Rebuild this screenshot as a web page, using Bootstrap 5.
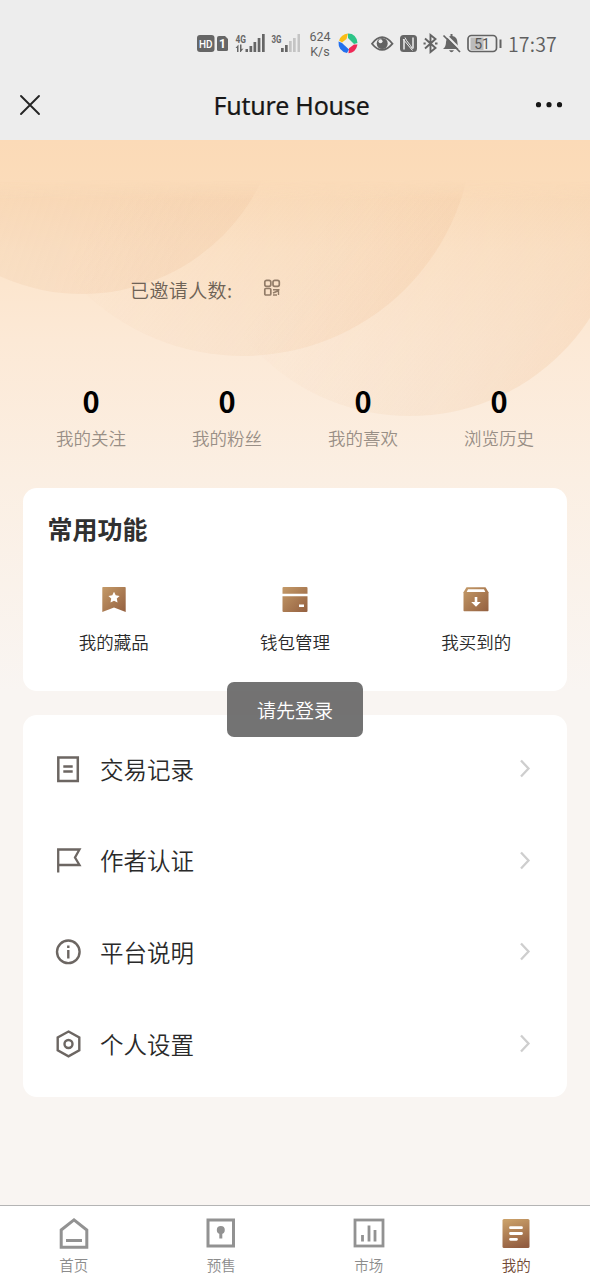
<!DOCTYPE html>
<html lang="zh-CN">
<head>
<meta charset="utf-8">
<meta name="viewport" content="width=device-width, initial-scale=1">
<title>Future House</title>
<link href="https://cdn.jsdelivr.net/npm/bootstrap@5.3.0/dist/css/bootstrap.min.css" rel="stylesheet">
<style>
  body { font-family: "Noto Sans CJK SC", sans-serif; font-weight: 350; color: #2a2a2a; background: #f9f5f2; line-height: 1; }
  svg { display: block; flex: none; }
  .phone { height: 1278px; background: linear-gradient(#fbdab7 0, #fbdab7 140px, #fbdcba 185px, #fce4ca 250px, #fce9d6 340px, #fbefe3 480px, #f9f5f2 690px); }
  .topbar { height: 140px; background: #ededed; }
  .status { height: 70px; padding: 17px 33px 0 196px; color: #5f5f5f; }
  .net { font: 400 12.5px/15px Roboto, sans-serif; width: 24px; margin-left: 6px; padding-top: 12px; }
  .clock { font: 350 19.500px/24px "Noto Sans CJK SC", sans-serif; margin: 15px 0 0 3px; letter-spacing: .2px; }
  .titlebar { height: 70px; padding: 0 26px 0 18px; }
  .titlebar h1 { font: 400 25px/30px "Noto Sans", "Noto Sans CJK SC", sans-serif; color: #171717; -webkit-text-stroke: .2px #171717; padding: 0 0 0 7px; letter-spacing: -.2px; }
  .hero { height: 348px; }
  .rings { left: 0; top: 0; }
  .invite { padding: 138px 0 0 130px; height: 240px; font-size: 19px; color: #6e6256; }
  .invite span { line-height: 23px; width: 133px; letter-spacing: .4px; }
  .num { font-size: 29px; font-weight: 700; line-height: 40px; color: #000; }
  .stat-name { font-size: 17.5px; line-height: 26px; color: #998f86; margin-top: 5px; }
  .mx-page { margin-left: 23px; margin-right: 23px; }
  .panel { background: #fff; border-radius: 14px; }
  .panel-a { height: 203px; }
  .panel-a h2 { font-size: 25px; font-weight: 700; line-height: 36px; padding: 22px 0 0 24.5px; color: #303030; }
  .fn-row { padding-top: 40px; }
  .fn { font-size: 17.5px; line-height: 26px; margin-top: 15px; }
  .panel-b { height: 382px; margin-top: 24px; padding: 8px 36px 0 31px; }
  .line { height: 91.7px; font-size: 23.5px; }
  .line span { margin-left: 18px; padding-top: 1px; }
  .toast-tip { left: 227px; top: 682px; width: 136px; height: 55px; border-radius: 7px; background: rgba(96,96,96,.88); color: #fff; font-size: 19px; }
  .tabs { height: 73px; background: #fff; border-top: 1px solid #b4b4b4; color: #8c8c8c; font-size: 14.5px; padding-top: 11px; }
  .tabs .tab-name { line-height: 20px; margin-top: 6px; }
  .tabs .current { color: #704733; }
</style>
</head>
<body>
<div class="phone d-flex flex-column position-relative overflow-hidden">
  <header class="topbar">
    <div class="status d-flex align-items-start justify-content-between">
      <div class="d-flex">
        <svg width="106" height="38" viewBox="196 17 106 38" fill="#666" font-family="Roboto, sans-serif" font-weight="700">
          <rect x="197" y="35" width="17.500" height="17" rx="3"/>
          <text x="199" y="47.500" font-size="10.500" fill="#fff" font-weight="500" textLength="13.500" lengthAdjust="spacingAndGlyphs">HD</text>
          <path d="M219 36h6l3 3v10.500q0 1.500-1.500 1.500h-8q-1.500 0-1.500-1.500V38q0-2 2-2z"/>
          <text x="222.500" y="48" font-size="12" fill="#fff" text-anchor="middle">1</text>
          <text x="235.500" y="42.500" font-size="10.500" textLength="10.500" lengthAdjust="spacingAndGlyphs">4G</text>
          <path d="M235.500 48l3-3.500V52H237v-4zM240 44.500h1.500v4.500l2-.5-2.700 3.500H240zM245.500 49h2.500v3h-2.500zM249.500 46h2.700v6h-2.700zM253.500 42h2.700v10h-2.700zM257.700 38h2.700v14h-2.700zM262 34h2.700v18H262z"/>
          <text x="271.500" y="42.500" font-size="10.500" textLength="10" lengthAdjust="spacingAndGlyphs">3G</text>
          <path d="M281 48h2.700v4H281zM285 45h2.700v7H285z"/>
          <path d="M289 41h2.700v11H289zM293 38h2.700v14H293zM297.500 34h2.500v18h-2.500z" fill="#c4c4c4"/>
        </svg>
        <div class="net text-center"><div>624</div><div>K/s</div></div>
        <svg width="28" height="38" viewBox="332 17 28 38">
          <path d="M339 40.500q2-6 9-7l-1.500 5.500-4.500 3.500z" fill="#f9bd16"/>
          <path d="M348 33.500q8.500 0 9.500 9.500l-3.500 1-6-6z" fill="#2dc487"/>
          <path d="M357.500 44.500q-1.500 8-9 8.800l.5-5 5-3.800z" fill="#ef2856"/>
          <path d="M338.500 41.500q-.5 9.500 8.500 11.500l2-3.500-7-6.500z" fill="#2370ee"/>
        </svg>
      </div>
      <div class="d-flex">
        <svg width="134" height="38" viewBox="370.500 17 134 38" fill="none" stroke="#636363" stroke-width="1.800">
          <path d="M371.500 43.700q10-13 20.500 0q-10.500 12.500-20.500 0z"/>
          <circle cx="381.700" cy="43.500" r="5.500" fill="#636363" stroke="none"/><circle cx="380" cy="41.200" r="2" fill="#ededed" stroke="none"/>
          <rect x="399.500" y="35" width="17" height="17" rx="3.500" fill="#666" stroke="none"/>
          <path d="M403.500 49.500V39M412.500 37.500V48.500" stroke="#ededed" stroke-width="1.500"/><path d="M404.500 37.500c2 5 5 6 7.500 11.500M402.500 39l9.500 11.500" stroke="#ededed" stroke-width="1"/>
          <path d="M424.500 38.500l10.500 9.500-5 4V35l5 4-10.500 9.500M423 43.500h2.200M434.500 43.500h2.500" stroke-width="1.900"/>
          <path d="M442.500 49q3-2 3-7 .5-5 4.500-6v-2h2v2q5 1 5 7 0 4 3 6zM448.500 50.200h5q-2.500 4-5 0z" fill="#666" stroke="none"/>
          <path d="M444.500 34l17 17" stroke="#ededed" stroke-width="2"/><path d="M443 35.500l16.500 16.500" stroke-width="1.700"/>
          <rect x="470" y="37.500" width="13" height="12.500" fill="#bbb" stroke="none"/>
          <rect x="467.500" y="35.500" width="28.500" height="16" rx="3.500" stroke-width="1.700"/>
          <path d="M500 39.500v8.500" stroke-width="2"/>
          <text x="481.500" y="48.700" text-anchor="middle" font-family="Roboto, sans-serif" font-size="14" font-weight="400" fill="#555" stroke="none">51</text>
        </svg>
        <div class="clock">17:37</div>
      </div>
    </div>
    <div class="titlebar d-flex align-items-center justify-content-between">
      <svg width="24" height="24" viewBox="0 0 24 24" stroke="#252525" stroke-width="1.900" stroke-linecap="round"><path d="M3 3l18 18M21 3L3 21"/></svg>
      <h1 class="m-0">Future House</h1>
      <svg width="30" height="8" viewBox="0 0 30 8" fill="#171717"><circle cx="4.500" cy="3.700" r="2.600"/><circle cx="15" cy="3.700" r="2.600"/><circle cx="25.500" cy="3.700" r="2.600"/></svg>
    </div>
  </header>

  <section class="hero position-relative">
    <svg class="rings position-absolute" width="590" height="348" viewBox="0 140 590 348">
      <defs>
        <linearGradient id="ring" x1=".38" y1=".45" x2=".9" y2=".85"><stop offset="0" stop-color="#f1c8a2" stop-opacity="0"/><stop offset=".7" stop-color="#f1c8a2" stop-opacity=".2"/><stop offset="1" stop-color="#f1c49b" stop-opacity=".3"/></linearGradient>
        <linearGradient id="ring-left" x1=".1" y1=".5" x2=".8" y2=".75"><stop offset="0" stop-color="#f1c8a2" stop-opacity=".16"/><stop offset="1" stop-color="#efc5a0" stop-opacity=".3"/></linearGradient>
        <linearGradient id="veil" x1="0" y1="180" x2="0" y2="200" gradientUnits="userSpaceOnUse"><stop offset="0" stop-color="#000"/><stop offset="1" stop-color="#fff"/></linearGradient>
        <mask id="fade" maskUnits="userSpaceOnUse" x="0" y="140" width="590" height="348"><rect y="140" width="590" height="348" fill="url(#veil)"/></mask>
      </defs>
      <g fill="url(#ring)" mask="url(#fade)"><circle cx="82" cy="95" r="199" fill="url(#ring-left)"/><circle cx="243" cy="126" r="230"/><circle cx="410" cy="202" r="214"/></g>
    </svg>
    <div class="invite d-flex position-relative">
      <span>已邀请人数:</span>
      <svg width="18" height="19" viewBox="0 0 18 19" fill="none" stroke="#927c68" stroke-width="1.700"><rect x="1.800" y="2.300" width="6" height="6" rx="1.800"/><rect x="10" y="2.300" width="6.300" height="6" rx="1.800"/><rect x="1.800" y="10.500" width="6" height="6.500" rx="1"/><path d="M10 11.800h6.500M10 15l6-2.500M15.500 13v4M10 17h4" stroke-width="1.400"/></svg>
    </div>
    <div class="mx-page position-relative">
      <div class="row g-0 text-center">
        <div class="col-3"><div class="num">0</div><div class="stat-name">我的关注</div></div>
        <div class="col-3"><div class="num">0</div><div class="stat-name">我的粉丝</div></div>
        <div class="col-3"><div class="num">0</div><div class="stat-name">我的喜欢</div></div>
        <div class="col-3"><div class="num">0</div><div class="stat-name">浏览历史</div></div>
      </div>
    </div>
  </section>

  <section class="panel panel-a mx-page">
    <h2 class="m-0">常用功能</h2>
    <div class="row g-0 text-center fn-row">
      <div class="col-4">
        <svg class="mx-auto" width="28" height="28" viewBox="0 0 28 28"><defs><linearGradient id="gold" x1="0" y1="0" x2="1" y2="1"><stop stop-color="#c49a68"/><stop offset="1" stop-color="#946040"/></linearGradient></defs><path fill="url(#gold)" d="M3 1h22q.7 0 .7.700V26L14 21.500 2.300 26V1.700Q2.300 1 3 1z"/><path fill="#fff" d="M14 5.800l1.700 3.500 3.900.6-2.800 2.700.7 3.900-3.500-1.800-3.500 1.800.7-3.900-2.800-2.700 3.900-.6z"/></svg>
        <div class="fn">我的藏品</div>
      </div>
      <div class="col-4">
        <svg class="mx-auto" width="28" height="28" viewBox="0 0 28 28"><path fill="url(#gold)" d="M2.500 1h23q1 0 1 1v23q0 1-1 1h-23q-1 0-1-1V2q0-1 1-1z"/><path fill="#fff" d="M1 7.800h26v2.400H1zM18 18.500h5v2.500h-5z"/></svg>
        <div class="fn">钱包管理</div>
      </div>
      <div class="col-4">
        <svg class="mx-auto" width="28" height="28" viewBox="0 0 28 28"><path fill="url(#gold)" d="M4.500 1.200h19l3 5V24.500q0 .7-.7.700H2.200q-.7 0-.7-.7V6.200z"/><path fill="#fff" d="M6 3.300h16l1.300 2.700H4.700zM12.700 11h2.600v5h3.500L14 20.800 9.200 16h3.500z"/></svg>
        <div class="fn">我买到的</div>
      </div>
    </div>
  </section>

  <section class="panel panel-b mx-page">
    <div class="line d-flex align-items-center">
      <svg width="28" height="28" viewBox="0 0 28 28" fill="none" stroke="#6c6662" stroke-width="2.500"><rect x="4.300" y="2.500" width="19.500" height="23.500"/><path d="M9.300 11.500h9.400M9.300 16.500h9.400"/></svg>
      <span class="me-auto">交易记录</span>
      <svg width="12" height="20" viewBox="0 0 12 20" fill="none" stroke="#cecece" stroke-width="2.300"><path d="M2 1.500l7.500 8L2 17.500"/></svg>
    </div>
    <div class="line d-flex align-items-center">
      <svg width="28" height="28" viewBox="0 0 28 28" fill="none" stroke="#6c6662" stroke-width="2.300"><path d="M4.200 25.500V2.500H25.500l-4.500 8L25.500 18H4.200"/></svg>
      <span class="me-auto">作者认证</span>
      <svg width="12" height="20" viewBox="0 0 12 20" fill="none" stroke="#cecece" stroke-width="2.300"><path d="M2 1.500l7.500 8L2 17.500"/></svg>
    </div>
    <div class="line d-flex align-items-center">
      <svg width="28" height="28" viewBox="0 0 28 28" fill="none" stroke="#6c6662" stroke-width="2.400"><circle cx="14.300" cy="13.800" r="11.300"/><path d="M14.300 12v8.500M14.300 7.500v2.500"/></svg>
      <span class="me-auto">平台说明</span>
      <svg width="12" height="20" viewBox="0 0 12 20" fill="none" stroke="#cecece" stroke-width="2.300"><path d="M2 1.500l7.500 8L2 17.500"/></svg>
    </div>
    <div class="line d-flex align-items-center">
      <svg width="28" height="28" viewBox="0 0 28 28" fill="none" stroke="#6c6662" stroke-width="2.400"><path d="M14.500 1.500l10.800 6v12.800l-10.800 6-10.800-6V7.500z"/><circle cx="14.500" cy="14" r="4"/></svg>
      <span class="me-auto">个人设置</span>
      <svg width="12" height="20" viewBox="0 0 12 20" fill="none" stroke="#cecece" stroke-width="2.300"><path d="M2 1.500l7.500 8L2 17.500"/></svg>
    </div>
  </section>

  <nav class="tabs mt-auto">
    <div class="row g-0 text-center">
      <div class="col-3">
        <svg class="mx-auto" width="32" height="32" viewBox="0 0 32 32" fill="none" stroke="#929292" stroke-width="3"><path d="M3.200 13L16 2.800 28.800 13v17.300H3.200z"/><path d="M8 23.500h16"/></svg>
        <div class="tab-name">首页</div>
      </div>
      <div class="col-3">
        <svg class="mx-auto" width="32" height="32" viewBox="0 0 32 32" fill="none" stroke="#929292" stroke-width="3"><rect x="3" y="3" width="25.500" height="26"/><circle cx="15.800" cy="13" r="4" fill="#929292" stroke="none"/><path d="M15.800 13v8.500"/></svg>
        <div class="tab-name">预售</div>
      </div>
      <div class="col-3">
        <svg class="mx-auto" width="32" height="32" viewBox="0 0 32 32" fill="none" stroke="#929292" stroke-width="2.800"><rect x="2" y="3" width="28" height="26"/><path d="M9.500 18v6.500M16 8.500v16M22 13v11.500"/></svg>
        <div class="tab-name">市场</div>
      </div>
      <div class="col-3 current">
        <svg class="mx-auto" width="32" height="32" viewBox="0 0 32 32"><defs><linearGradient id="bronze" x1=".3" y1="0" x2=".6" y2="1"><stop stop-color="#c99f68"/><stop offset="1" stop-color="#925c40"/></linearGradient></defs><rect x="2.500" y="2" width="27" height="29" rx="1.500" fill="url(#bronze)"/><path d="M10.500 10.700h11M10.500 16.500h11M10.500 22.300h6" stroke="#fff" stroke-width="2.800" stroke-linecap="round"/></svg>
        <div class="tab-name">我的</div>
      </div>
    </div>
  </nav>

  <div class="toast-tip position-absolute d-flex align-items-center justify-content-center">请先登录</div>
</div>
<script src="https://cdn.jsdelivr.net/npm/bootstrap@5.3.0/dist/js/bootstrap.bundle.min.js"></script>
</body>
</html>
